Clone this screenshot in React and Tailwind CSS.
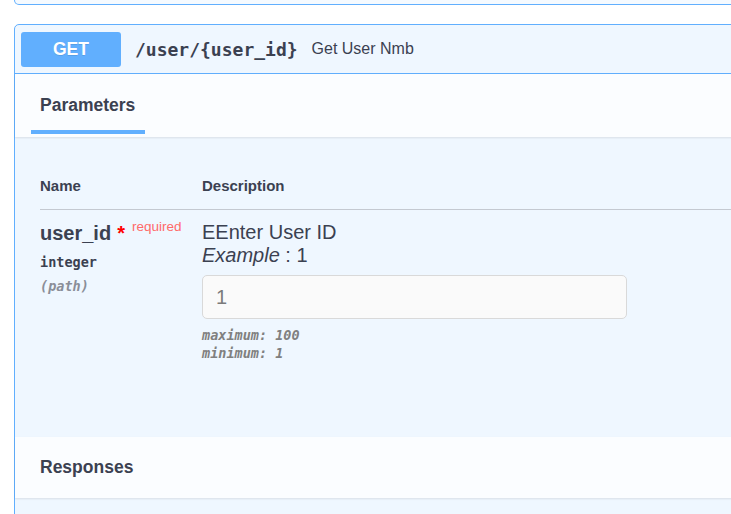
import React from 'react';

const sans = "font-['Liberation_Sans',Arial,sans-serif]";
const mono = "font-['DejaVu_Sans_Mono',monospace]";

export default function App() {
  return (
    <div className={`w-[731px] h-[514px] overflow-hidden bg-white ${sans} text-[#3b4151]`}>
      {/* previous (collapsed) block */}
      <div className="ml-[14px] w-[760px] h-[5px] border-x border-b border-[#61affe] rounded-b-[5px] bg-[#f5faff]" />

      {/* GET operation */}
      <div className="mt-[19px] ml-[14px] w-[760px] border border-[#61affe] rounded-[5px] bg-[#eff7ff] h-[520px]">
        {/* summary */}
        <div className="flex items-center h-[49px] px-[6px] border-b border-[#61affe]">
          <div className="w-[100px] h-[35px] flex items-center justify-center rounded-[3px] bg-[#61affe] text-white text-[17.5px] font-bold [text-shadow:0_1px_0_rgba(0,0,0,0.1)]">
            GET
          </div>
          <span className={`${mono} ml-[14px] text-[18px] font-bold text-[#3b4151]`}>
            /user/{'{user_id}'}
          </span>
          <span className="ml-[14px] text-[16px] text-[#3b4151]">Get User Nmb</span>
        </div>

        {/* parameters header */}
        <div className="bg-[#fbfdff] pt-[19px] pb-[3px] px-[16px] shadow-[0_1px_2px_rgba(0,0,0,0.1)] relative">
          <div className="w-[114px]">
            <div className="pl-[9px] text-[17.5px] leading-[24px] font-bold">Parameters</div>
            <div className="mt-[13px] h-[4px] bg-[#61affe]" />
          </div>
        </div>

        {/* parameters table */}
        <div className="pl-[25px] pt-[25px] h-[300px]">
          <div className="flex border-b border-[#c4c9d1] pt-[14px] pb-[13px] text-[15px] leading-[20px] font-bold">
            <div className="w-[162px]">Name</div>
            <div>Description</div>
          </div>
          <div className="flex pt-[11px]">
            <div className="w-[162px]">
              <div className="flex items-start">
                <span className="text-[20px] leading-[24px] font-bold">user_id</span>
                <span className="ml-[6px] text-[20px] leading-[24px] font-bold text-[#ff0000]">*</span>
                <span className="ml-[7px] text-[13.5px] leading-[14px] text-[#ff6a6a] -mt-[1px]">required</span>
              </div>
              <div className={`${mono} mt-[5px] text-[13.5px] leading-[24px] font-bold`}>integer</div>
              <div className={`${mono} text-[13.5px] leading-[24px] italic font-semibold text-[#8a8e98]`}>(path)</div>
            </div>
            <div>
              <div className="text-[20px] leading-[23px]">EEnter User ID</div>
              <div className="text-[20px] leading-[23px]">
                <i>Example</i> : 1
              </div>
              <div className="mt-[8px] w-[425px] h-[44px] flex items-center px-[13px] rounded-[5px] border border-[#d9d9d9] bg-[#fafafa] text-[20px] text-[#7b7b7b]">
                1
              </div>
              <div className={`${mono} mt-[7px] text-[13.5px] leading-[18px] italic font-bold text-[#808080]`}>
                <div>maximum: 100</div>
                <div>minimum: 1</div>
              </div>
            </div>
          </div>
        </div>

        {/* responses header */}
        <div className="h-[61px] flex items-center pl-[25px] bg-[#fbfdff] shadow-[0_1px_2px_rgba(0,0,0,0.1)]">
          <span className="text-[17.5px] font-bold">Responses</span>
        </div>
      </div>
    </div>
  );
}
